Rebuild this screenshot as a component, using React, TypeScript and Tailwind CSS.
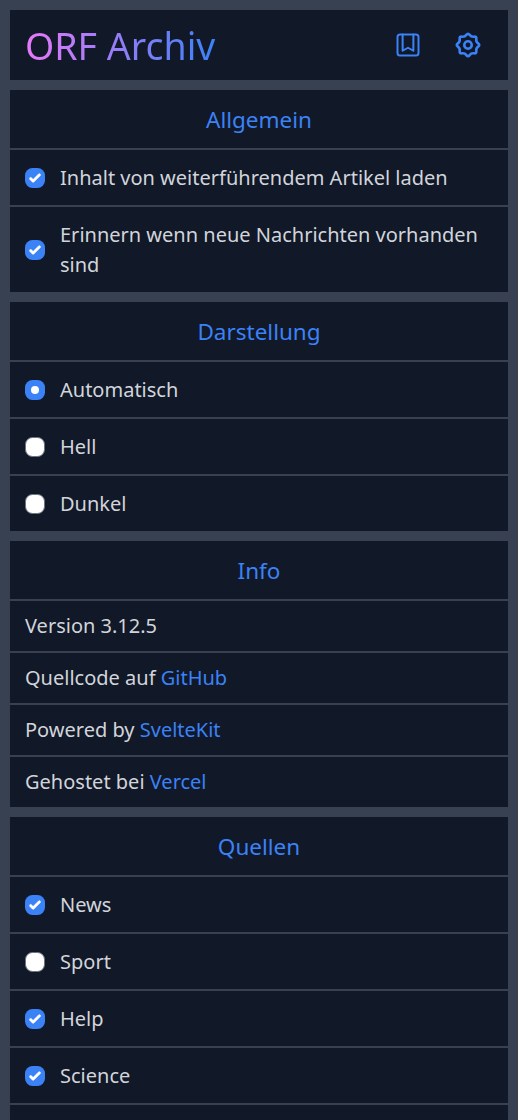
import { useState, type ReactNode } from 'react';

const check = (
  <svg viewBox="0 0 16 16" className="size-5" fill="#fff" stroke="#fff" strokeWidth="0.3">
    <path d="M12.207 4.793a1 1 0 010 1.414l-5 5a1 1 0 01-1.414 0l-2-2a1 1 0 011.414-1.414L6.5 9.086l4.293-4.293a1 1 0 011.414 0z" />
  </svg>
);

function BookmarkIcon() {
  return (
    <svg viewBox="0 0 24 24" className="size-[30px]" fill="none" stroke="currentColor" strokeWidth="1.6" strokeLinecap="round" strokeLinejoin="round">
      <rect x="3.6" y="3.6" width="16.8" height="16.8" rx="2" />
      <path d="M7.7 3.6v13l4.3-2.4 4.3 2.4v-13" />
    </svg>
  );
}

// Closed, smoothed outline of an eight-toothed gear centred at 12,12.
function gearOutline() {
  const points = Array.from({ length: 16 }, (_, i) => {
    const radius = i % 2 === 0 ? 9.9 : 6.8;
    const angle = (i * Math.PI) / 8;
    return [12 + radius * Math.sin(angle), 12 - radius * Math.cos(angle)];
  });
  const middle = (i: number) => {
    const a = points[i % 16];
    const b = points[(i + 1) % 16];
    return `${((a[0] + b[0]) / 2).toFixed(2)} ${((a[1] + b[1]) / 2).toFixed(2)}`;
  };
  return `M${middle(15)}` + points.map((p, i) => `Q${p[0].toFixed(2)} ${p[1].toFixed(2)} ${middle(i)}`).join('') + 'Z';
}

function GearIcon() {
  return (
    <svg viewBox="0 0 24 24" className="size-[30px]" fill="none" stroke="currentColor" strokeWidth="2.1" strokeLinejoin="round">
      <path d={gearOutline()} />
      <circle cx="12" cy="12" r="3" />
    </svg>
  );
}

function Section({ title, children }: { title: string; children: ReactNode }) {
  return (
    <section className="flex flex-col gap-[2px]">
      <h2 className="flex h-[58px] items-center justify-center bg-[#111827] pt-[2px] text-[22.5px] text-[#3b82f6]">{title}</h2>
      {children}
    </section>
  );
}

function Box({ on, radio }: { on: boolean; radio?: boolean }) {
  return (
    <span className={`flex size-5 shrink-0 items-center justify-center rounded-[7.5px] ${on ? 'bg-[#3b82f6]' : 'border border-[#6b7280] bg-white'}`}>
      {on && (radio ? <span className="size-2 rounded-full bg-white" /> : check)}
    </span>
  );
}

function Option({ label, on, radio, onClick }: { label: string; on: boolean; radio?: boolean; onClick: () => void }) {
  return (
    <button type="button" role={radio ? 'radio' : 'checkbox'} aria-checked={on} onClick={onClick} className="flex items-center gap-[15px] bg-[#111827] px-[15px] py-[12.5px] text-left">
      <Box on={on} radio={radio} />
      <span>{label}</span>
    </button>
  );
}

function CheckOption({ label, initial = true }: { label: string; initial?: boolean }) {
  const [on, setOn] = useState(initial);
  return <Option label={label} on={on} onClick={() => setOn(!on)} />;
}

function InfoRow({ text, link }: { text: string; link?: string }) {
  return (
    <p className="bg-[#111827] px-[15px] py-[10px]">
      {text}
      {link && <a href="#" className="text-[#3b82f6]">{link}</a>}
    </p>
  );
}

export default function App() {
  const [theme, setTheme] = useState('Automatisch');
  return (
    <div className="flex h-screen flex-col gap-[10px] overflow-hidden bg-[#374151] p-[10px] pb-0 font-['Noto_Sans',sans-serif] text-[20px] leading-[30px] text-[#d1d5db] antialiased *:shrink-0">
      <header className="flex h-[70px] items-center justify-between bg-[#111827] px-[15px]">
        <h1 className="bg-linear-to-r/srgb from-[#e879f9] to-[#3b82f6] bg-clip-text text-[37.5px] leading-[45px] text-transparent">ORF Archiv</h1>
        <nav className="flex gap-[30px] pr-[10px] text-[#3b82f6]">
          <BookmarkIcon />
          <GearIcon />
        </nav>
      </header>
      <Section title="Allgemein">
        <CheckOption label="Inhalt von weiterführendem Artikel laden" />
        <CheckOption label="Erinnern wenn neue Nachrichten vorhanden sind" />
      </Section>
      <Section title="Darstellung">
        {['Automatisch', 'Hell', 'Dunkel'].map((t) => (
          <Option key={t} label={t} radio on={theme === t} onClick={() => setTheme(t)} />
        ))}
      </Section>
      <Section title="Info">
        <InfoRow text="Version 3.12.5" />
        <InfoRow text="Quellcode auf " link="GitHub" />
        <InfoRow text="Powered by " link="SvelteKit" />
        <InfoRow text="Gehostet bei " link="Vercel" />
      </Section>
      <Section title="Quellen">
        <CheckOption label="News" />
        <CheckOption label="Sport" initial={false} />
        <CheckOption label="Help" />
        <CheckOption label="Science" />
        <div className="h-[55px] bg-[#111827]" />
      </Section>
    </div>
  );
}
